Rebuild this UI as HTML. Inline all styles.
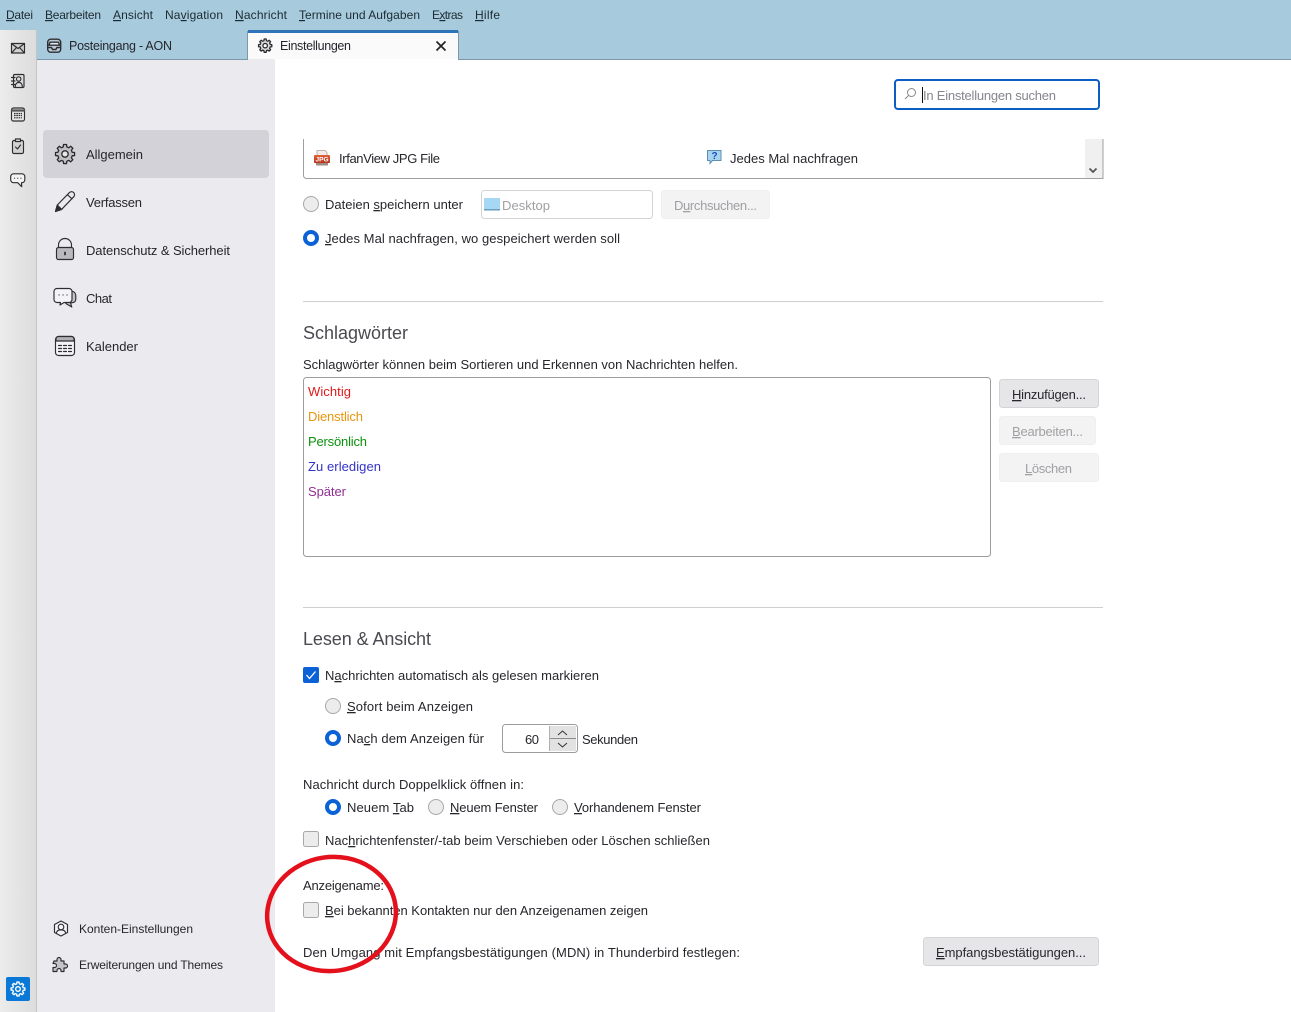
<!DOCTYPE html>
<html lang="de">
<head>
<meta charset="utf-8">
<title>Einstellungen</title>
<style>
html,body{margin:0;padding:0;background:#fff;overflow:hidden}
svg{display:block}
text{font-family:"Liberation Sans",sans-serif;font-size:13px;fill:#26262c}
.m{font-size:12px;fill:#1c2a33}
.s{font-size:12px}
.h{font-size:18px;fill:#4a4a50}
.g{fill:#a0a0a4}
.u{text-decoration:underline}
.ic{fill:none;stroke:#2e2e32;stroke-width:1.15;stroke-linejoin:round;stroke-linecap:round}
</style>
</head>
<body>
<svg width="1291" height="1012" viewBox="0 0 1291 1012" xmlns="http://www.w3.org/2000/svg">
<defs>
<linearGradient id="lg" x1="0" x2="1" y1="0" y2="0"><stop offset="0" stop-color="#ececec"/><stop offset="1" stop-color="#dcdcdc"/></linearGradient>
<linearGradient id="jpg" x1="0" x2="0" y1="0" y2="1"><stop offset="0" stop-color="#e2603a"/><stop offset="1" stop-color="#b5331a"/></linearGradient>
<polygon id="gear" points="10.36,1.63 13.64,1.63 13.94,4.24 16.12,5.14 18.17,3.51 20.49,5.83 18.86,7.88 19.76,10.06 22.37,10.36 22.37,13.64 19.76,13.94 18.86,16.12 20.49,18.17 18.17,20.49 16.12,18.86 13.94,19.76 13.64,22.37 10.36,22.37 10.06,19.76 7.88,18.86 5.83,20.49 3.51,18.17 5.14,16.12 4.24,13.94 1.63,13.64 1.63,10.36 4.24,10.06 5.14,7.88 3.51,5.83 5.83,3.51 7.88,5.14 10.06,4.24"/>
</defs>

<!-- chrome backgrounds -->
<rect x="0" y="0" width="1291" height="60" fill="#a7cbdc"/>
<rect x="0" y="30" width="37" height="982" fill="url(#lg)"/>
<rect x="36" y="30" width="1" height="982" fill="#c4c4c4"/>
<rect x="37" y="60" width="238" height="952" fill="#eaeaef"/>
<rect x="37" y="59" width="1254" height="1" fill="#7d98a8"/>

<!-- menu -->
<text class="m" x="6" y="19" textLength="27"><tspan class="u">D</tspan>atei</text>
<text class="m" x="45" y="19" textLength="56"><tspan class="u">B</tspan>earbeiten</text>
<text class="m" x="113" y="19" textLength="40"><tspan class="u">A</tspan>nsicht</text>
<text class="m" x="165" y="19" textLength="58">Na<tspan class="u">v</tspan>igation</text>
<text class="m" x="235" y="19" textLength="52"><tspan class="u">N</tspan>achricht</text>
<text class="m" x="299" y="19" textLength="121"><tspan class="u">T</tspan>ermine und Aufgaben</text>
<text class="m" x="432" y="19" textLength="31">E<tspan class="u">x</tspan>tras</text>
<text class="m" x="475" y="19" textLength="25"><tspan class="u">H</tspan>ilfe</text>

<!-- tabs -->
<g class="ic" style="stroke-width:1.4">
<rect x="47.700" y="39.200" width="13" height="13" rx="3" fill="#b8cbd6"/>
<path d="M50 42.200h8.500l1 3H49z" fill="#e4edf2"/>
<path d="M48 47.500h3.500l1 2h3.400l1-2h3.500"/>
</g>
<text x="69" y="50" textLength="103" class="s" style="font-size:12.5px">Posteingang - AON</text>
<rect x="248" y="30" width="210" height="30" fill="#fafafb"/>
<rect x="248" y="30" width="210" height="3" fill="#2f73b8"/>
<rect x="247" y="31" width="1" height="29" fill="#7d98a8"/>
<rect x="458" y="31" width="1" height="29" fill="#7d98a8"/>
<rect x="248" y="59" width="27" height="1" fill="#eaeaef"/>
<rect x="275" y="59" width="183" height="1" fill="#fff"/>
<g transform="translate(257.500,38) scale(.64)">
<use href="#gear" fill="#dcdcdc" stroke="#2a2a2e" stroke-width="2" stroke-linejoin="round"/>
<circle cx="12" cy="12" r="3.500" fill="#fff" stroke="#2a2a2e" stroke-width="2"/>
</g>
<text x="280" y="50" textLength="71" class="s" style="font-size:12.5px">Einstellungen</text>
<path d="M436.500 41.500l9 9M445.500 41.500l-9 9" fill="none" stroke="#222" stroke-width="1.700"/>

<!-- left strip icons -->
<g class="ic">
<rect x="11.500" y="43.500" width="13" height="9.500" fill="#d0d0d0"/>
<path d="M11.500 43.500l6.500 5 6.500-5M11.500 53l5-5.500M24.500 53l-5-5.500"/>
<rect x="13.500" y="74.500" width="10.500" height="13" rx="1.200" fill="#dedede"/>
<circle cx="18.700" cy="79" r="2.200"/>
<path d="M15.300 86.500c0-5.500 7-5.500 7 0M11.500 77.500h3.500M11.500 81h3.500M11.500 84.500h3.500"/>
<rect x="11.500" y="108" width="13" height="13" rx="2" fill="#e8e8e8"/>
<path d="M12 110.500h12" stroke-width="2.200" stroke="#555"/>
<path d="M14 113.500h8M14 115.500h8M14 117.800h8" stroke-dasharray="1.600 .7" stroke-linecap="butt"/>
<rect x="12.500" y="140.500" width="11" height="13" rx="1.500" fill="#d2d2d2"/>
<rect x="15.500" y="139" width="5" height="2.500" fill="#eee"/>
<path d="M15.500 147l2 2 3-4"/>
<path d="M13.500 173.800h8.500a2.800 2.800 0 0 1 2.800 2.800v3.300a2.800 2.800 0 0 1-2.800 2.800h-.5l.2 4-4-4h-4.200a2.800 2.800 0 0 1-2.800-2.800v-3.300a2.800 2.800 0 0 1 2.800-2.800z" fill="#f4f4f4"/>
<path d="M14.500 178.200h.1M17.700 178.200h.1M20.900 178.200h.1"/>
</g>

<!-- sidebar -->
<rect x="43" y="130" width="226" height="48" rx="4" fill="#d2d2d8"/>
<g transform="translate(54,143)">
<use href="#gear" transform="scale(.92)" fill="#c0c0c4" stroke="#2a2a2e" stroke-width="1.400" stroke-linejoin="round"/>
<circle cx="11" cy="11" r="3.200" fill="#e8e8ea" stroke="#2a2a2e" stroke-width="1.300"/>
</g>
<text x="86" y="159" textLength="57">Allgemein</text>
<g class="ic">
<path d="M55.500 211.500l1.800-6.500 12-12.300a2.500 2.500 0 0 1 4.500 4l-12 12.500z" fill="#eaeaef"/>
<path d="M55.500 211.500l1.800-6.500 4.500 4.500z" fill="#2a2a2e"/>
<path d="M67.500 194.800l4.500 4"/>
<rect x="56.500" y="247.500" width="17" height="12" rx="2" fill="#b9b9be"/>
<path d="M58.500 247.500v-2.500a6.500 6.500 0 0 1 13 0v2.500"/>
<path d="M65 252.500v2" stroke-width="1.800"/>
<path d="M72 291c2.500.8 3.800 2.500 3.800 5v3c0 2.200-1.300 3.500-3.500 3.700l-1.800.3 1.300 4-6-3.500z" fill="#c4c4c8"/>
<path d="M57 288.500h12a3 3 0 0 1 3 3v8a3 3 0 0 1-3 3h-5l-4 2.500.5-2.500H57a3 3 0 0 1-3-3v-8a3 3 0 0 1 3-3z" fill="#f4f4f6"/>
<path d="M59 295h.1M63 295h.1M67 295h.1"/>
<rect x="55.500" y="336.500" width="19" height="19" rx="3" fill="#f4f4f6"/>
<path d="M56 341v-2a2.500 2.500 0 0 1 2.500-2.500h13a2.500 2.500 0 0 1 2.500 2.500v2z" fill="#b0b0b6"/>
<path d="M58.500 345.500h3M63.500 345.500h3M68.500 345.500h3M58.500 348.500h3M63.500 348.500h3M68.500 348.500h3M58.500 351.500h3M63.500 351.500h3M68.500 351.500h3"/>
</g>
<text x="86" y="207" textLength="56">Verfassen</text>
<text x="86" y="255" textLength="144">Datenschutz &amp; Sicherheit</text>
<text x="86" y="303" textLength="26">Chat</text>
<text x="86" y="351" textLength="52">Kalender</text>

<g class="ic" stroke-width="1.200">
<path d="M61 921l6.500 3.500v8L61 936l-6.500-3.500v-8z" fill="#f4f4f6"/>
<circle cx="61" cy="927" r="2.800"/>
<path d="M56.500 932.500c1-3.500 8-3.500 9 0"/>
<path d="M54 961h3v-1.500a2 2 0 0 1 4 0V961h3v3h1.500a2 2 0 0 1 0 4H64v3.500h-3v-1a2 2 0 0 0-4 0v1h-4v-4h1.500a2 2 0 0 0 0-4H53z" fill="#c4c4c8"/>
</g>
<text class="s" x="79" y="933" textLength="114">Konten-Einstellungen</text>
<text class="s" x="79" y="969" textLength="144">Erweiterungen und Themes</text>

<rect x="6" y="977" width="24" height="24" rx="2" fill="#0a78d6"/>
<g transform="translate(10,981) scale(.667)">
<use href="#gear" fill="none" stroke="#fff" stroke-width="2" stroke-linejoin="round"/>
<circle cx="12" cy="12" r="3.500" fill="none" stroke="#fff" stroke-width="2"/>
</g>

<!-- search -->
<rect x="895" y="80" width="204" height="29" rx="3" fill="#fff" stroke="#0b5fc4" stroke-width="2"/>
<circle cx="911.500" cy="92.500" r="4" fill="none" stroke="#888" stroke-width="1"/>
<path d="M908.500 95.500l-3.500 3.500" stroke="#888" stroke-width="1"/>
<rect x="922" y="87" width="1" height="16" fill="#111"/>
<text class="g" x="923" y="100" textLength="133" style="fill:#85858c">In Einstellungen suchen</text>

<!-- handlers list fragment -->
<path d="M303.500 139v36.500a3 3 0 0 0 3 3h796.500V139" fill="#fff" stroke="#a0a0a0" stroke-width="1"/>
<rect x="1085" y="139" width="17.500" height="39" fill="#f0f0f0"/>
<path d="M1089.500 168.500l3.500 3.500 3.500-3.500" fill="none" stroke="#555" stroke-width="1.800"/>
<path d="M317 150.500h8l2 2v3h-10z" fill="#f3ece8" stroke="#b0a09a" stroke-width=".8"/>
<rect x="314" y="155" width="16" height="8" rx="1" fill="url(#jpg)"/>
<rect x="316" y="163" width="12" height="2.500" fill="#a08a84"/>
<text x="315.500" y="161.500" textLength="13" style="font-size:6.500px;font-weight:bold;fill:#fff">JPG</text>
<text x="339" y="163" textLength="101">IrfanView JPG File</text>
<path d="M707.500 150.500h13.500v10h-8.500l-2.500 3v-3h-2.500z" fill="#a8d4f0" stroke="#5f8fb0" stroke-width="1"/>
<text x="711.500" y="159" style="font-size:10px;font-weight:bold;fill:#1b4fb8">?</text>
<text x="730" y="163" textLength="128">Jedes Mal nachfragen</text>

<!-- save options -->
<circle cx="311" cy="204" r="7.500" fill="#ececec" stroke="#a8a8a8"/>
<text x="325" y="209" textLength="138">Dateien <tspan class="u">s</tspan>peichern unter</text>
<rect x="481.500" y="190.500" width="171" height="28" rx="3" fill="#fff" stroke="#d4d4d4"/>
<rect x="484" y="198" width="16" height="12" fill="#a6d8f5"/>
<rect x="484" y="209" width="16" height="1.500" fill="#6b9dbd"/>
<text class="g" x="502" y="210" textLength="48">Desktop</text>
<rect x="661.500" y="190.500" width="108" height="28" rx="3" fill="#f3f3f4" stroke="#efefef"/>
<text class="g" x="674" y="210" textLength="83">D<tspan class="u">u</tspan>rchsuchen...</text>
<circle cx="311" cy="238" r="8" fill="#0b62d6"/>
<circle cx="311" cy="238" r="4" fill="#fff"/>
<text x="325" y="243" textLength="295"><tspan class="u">J</tspan>edes Mal nachfragen, wo gespeichert werden soll</text>

<rect x="303" y="301" width="800" height="1" fill="#cfcfcf"/>

<!-- Schlagwörter -->
<text class="h" x="303" y="339" textLength="105">Schlagwörter</text>
<text x="303" y="369" textLength="435">Schlagwörter können beim Sortieren und Erkennen von Nachrichten helfen.</text>
<rect x="303.500" y="377.500" width="687" height="179" rx="3" fill="#fff" stroke="#9c9c9c"/>
<text x="308" y="396" textLength="43" style="fill:#e01818">Wichtig</text>
<text x="308" y="421" textLength="55" style="fill:#e8950e">Dienstlich</text>
<text x="308" y="446" textLength="59" style="fill:#0b920b">Persönlich</text>
<text x="308" y="471" textLength="73" style="fill:#3333c8">Zu erledigen</text>
<text x="308" y="496" textLength="38" style="fill:#8f2f91">Später</text>

<rect x="999.500" y="379.500" width="99" height="28" rx="3" fill="#e6e6e8" stroke="#d4d4d6"/>
<text x="1012" y="399" textLength="74"><tspan class="u">H</tspan>inzufügen...</text>
<rect x="999.500" y="416.500" width="96" height="28" rx="3" fill="#f3f3f4" stroke="#efefef"/>
<text class="g" x="1012" y="436" textLength="71"><tspan class="u">B</tspan>earbeiten...</text>
<rect x="999.500" y="453.500" width="99" height="28" rx="3" fill="#f3f3f4" stroke="#efefef"/>
<text class="g" x="1025" y="473" textLength="47"><tspan class="u">L</tspan>öschen</text>

<rect x="303" y="607" width="800" height="1" fill="#cfcfcf"/>

<!-- Lesen & Ansicht -->
<text class="h" x="303" y="645" textLength="128">Lesen &amp; Ansicht</text>
<rect x="303" y="667" width="16" height="16" rx="2" fill="#0b62d6"/>
<path d="M306.500 675l3 3.500 6-7" fill="none" stroke="#fff" stroke-width="1.300"/>
<text x="325" y="680" textLength="274">N<tspan class="u">a</tspan>chrichten automatisch als gelesen markieren</text>
<circle cx="333" cy="706" r="7.500" fill="#ececec" stroke="#a8a8a8"/>
<text x="347" y="711" textLength="126"><tspan class="u">S</tspan>ofort beim Anzeigen</text>
<circle cx="333" cy="738" r="8" fill="#0b62d6"/>
<circle cx="333" cy="738" r="4" fill="#fff"/>
<text x="347" y="743" textLength="137">Na<tspan class="u">c</tspan>h dem Anzeigen für</text>
<rect x="502.500" y="724.500" width="75" height="28" rx="3" fill="#fff" stroke="#9c9c9c"/>
<text x="525" y="744" textLength="14">60</text>
<rect x="549" y="726" width="27" height="25" fill="#e2e2e2"/>
<rect x="549" y="738" width="27" height="1" fill="#8c8c8c"/>
<rect x="549" y="726" width="1" height="25" fill="#b0b0b0"/>
<path d="M558 735l4.500-4 4.500 4M558 743l4.500 4 4.500-4" fill="none" stroke="#333" stroke-width="1"/>
<text x="582" y="744" textLength="56">Sekunden</text>

<text x="303" y="789" textLength="221">Nachricht durch Doppelklick öffnen in:</text>
<circle cx="333" cy="807" r="8" fill="#0b62d6"/>
<circle cx="333" cy="807" r="4" fill="#fff"/>
<text x="347" y="812" textLength="67">Neuem <tspan class="u">T</tspan>ab</text>
<circle cx="436" cy="807" r="7.500" fill="#ececec" stroke="#a8a8a8"/>
<text x="450" y="812" textLength="88"><tspan class="u">N</tspan>euem Fenster</text>
<circle cx="560" cy="807" r="7.500" fill="#ececec" stroke="#a8a8a8"/>
<text x="574" y="812" textLength="127"><tspan class="u">V</tspan>orhandenem Fenster</text>

<rect x="303.500" y="831.500" width="15" height="15" rx="2" fill="#ececec" stroke="#a8a8a8"/>
<text x="325" y="845" textLength="385">Nac<tspan class="u">h</tspan>richtenfenster/-tab beim Verschieben oder Löschen schließen</text>

<text x="303" y="890" textLength="81">Anzeigename:</text>
<rect x="303.500" y="902.500" width="15" height="15" rx="2" fill="#ececec" stroke="#a8a8a8"/>
<text x="325" y="915" textLength="323"><tspan class="u">B</tspan>ei bekannten Kontakten nur den Anzeigenamen zeigen</text>
<text x="303" y="957" textLength="437">Den Umgang mit Empfangsbestätigungen (MDN) in Thunderbird festlegen:</text>
<rect x="923.500" y="937.500" width="175" height="28" rx="3" fill="#e6e6e8" stroke="#d4d4d6"/>
<text x="936" y="957" textLength="150"><tspan class="u">E</tspan>mpfangsbestätigungen...</text>

<!-- red annotation circle -->
<ellipse cx="331.500" cy="914" rx="64.500" ry="57" fill="none" stroke="#e4101c" stroke-width="4.500" transform="rotate(-8 331.500 914)"/>
</svg>
</body>
</html>
